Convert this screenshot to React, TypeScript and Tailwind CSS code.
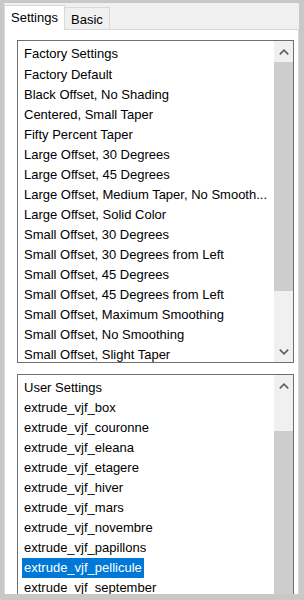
import React from "react";

const factory = [
  "Factory Default",
  "Black Offset, No Shading",
  "Centered, Small Taper",
  "Fifty Percent Taper",
  "Large Offset, 30 Degrees",
  "Large Offset, 45 Degrees",
  "Large Offset, Medium Taper, No Smooth...",
  "Large Offset, Solid Color",
  "Small Offset, 30 Degrees",
  "Small Offset, 30 Degrees from Left",
  "Small Offset, 45 Degrees",
  "Small Offset, 45 Degrees from Left",
  "Small Offset, Maximum Smoothing",
  "Small Offset, No Smoothing",
  "Small Offset, Slight Taper",
];

const user = [
  "extrude_vjf_box",
  "extrude_vjf_couronne",
  "extrude_vjf_eleana",
  "extrude_vjf_etagere",
  "extrude_vjf_hiver",
  "extrude_vjf_mars",
  "extrude_vjf_novembre",
  "extrude_vjf_papillons",
  "extrude_vjf_pellicule",
  "extrude_vjf_september",
];

function Chevron({ up }: { up?: boolean }) {
  return (
    <svg width="10" height="6" viewBox="0 0 10 6" className="block">
      {up ? (
        <path d="M0.8 5.4 L5 1.2 L9.2 5.4" fill="none" stroke="#606060" strokeWidth="1.7" />
      ) : (
        <path d="M0.8 0.6 L5 4.8 L9.2 0.6" fill="none" stroke="#606060" strokeWidth="1.7" />
      )}
    </svg>
  );
}

function ListBox({
  header,
  headerH,
  items,
  selected,
  height,
  thumbTop,
  thumbHeight,
  showDown,
}: {
  header: string;
  headerH: string;
  items: string[];
  selected?: string;
  height: number;
  thumbTop: number;
  thumbHeight: number;
  showDown: boolean;
}) {
  return (
    <div
      className="ml-[12px] w-[277px] border border-[#6e6e6e] bg-white flex shrink-0"
      style={{ height }}
    >
      <div className="flex-1 min-w-0 pt-[2px] pl-[4px] overflow-hidden">
        <div className={headerH + " flex items-center pl-[2px] whitespace-nowrap"}>{header}</div>
        {items.map((t) => (
          <div key={t} className="h-[20px] flex items-center whitespace-nowrap">
            <span
              className={
                t === selected
                  ? "bg-[#0078d7] text-white px-[2px] h-[20px] flex items-center"
                  : "px-[2px]"
              }
            >
              {t}
            </span>
          </div>
        ))}
      </div>
      <div className="w-[19px] shrink-0 bg-[#f0f0f0] flex flex-col relative">
        <div className="h-[21px] flex items-center justify-center">
          <Chevron up />
        </div>
        <div
          className="absolute left-0 right-0 bg-[#cdcdcd]"
          style={{ top: thumbTop, height: thumbHeight }}
        />
        {showDown && (
          <div className="absolute bottom-0 left-0 right-0 h-[21px] flex items-center justify-center">
            <Chevron />
          </div>
        )}
      </div>
    </div>
  );
}

export default function App() {
  return (
    <div
      className="w-[304px] h-[600px] bg-[#c8c8c8] pl-[4px] pt-[3px] pr-[5px] pb-[6px] text-[13px] text-black"
      style={{ fontFamily: '"Liberation Sans", Arial, sans-serif' }}
    >
      <div className="w-[295px] h-[591px] flex flex-col overflow-hidden bg-[#f0f0f0]">
        <div className="h-[26px] flex items-end relative shrink-0">
          <div className="relative z-10 w-[61px] h-[25px] bg-white border border-b-0 border-[#d9d9d9] -mb-px flex items-center pl-[6px]">
            Settings
          </div>
          <div className="w-[45px] h-[22px] border border-b-0 border-l-0 border-[#d9d9d9] flex items-center pl-[6px] pt-[2px]">
            Basic
          </div>
        </div>
        <div className="flex-1 bg-white border border-[#d9d9d9] border-b-0 pt-[10px] flex flex-col gap-[11px] overflow-hidden">
          <ListBox
            header="Factory Settings"
            headerH="h-[22px]"
            items={factory}
            height={323}
            thumbTop={21}
            thumbHeight={229}
            showDown
          />
          <ListBox
            header="User Settings"
            headerH="h-[21px]"
            items={user}
            selected="extrude_vjf_pellicule"
            height={240}
            thumbTop={56}
            thumbHeight={200}
            showDown={false}
          />
        </div>
      </div>
    </div>
  );
}
